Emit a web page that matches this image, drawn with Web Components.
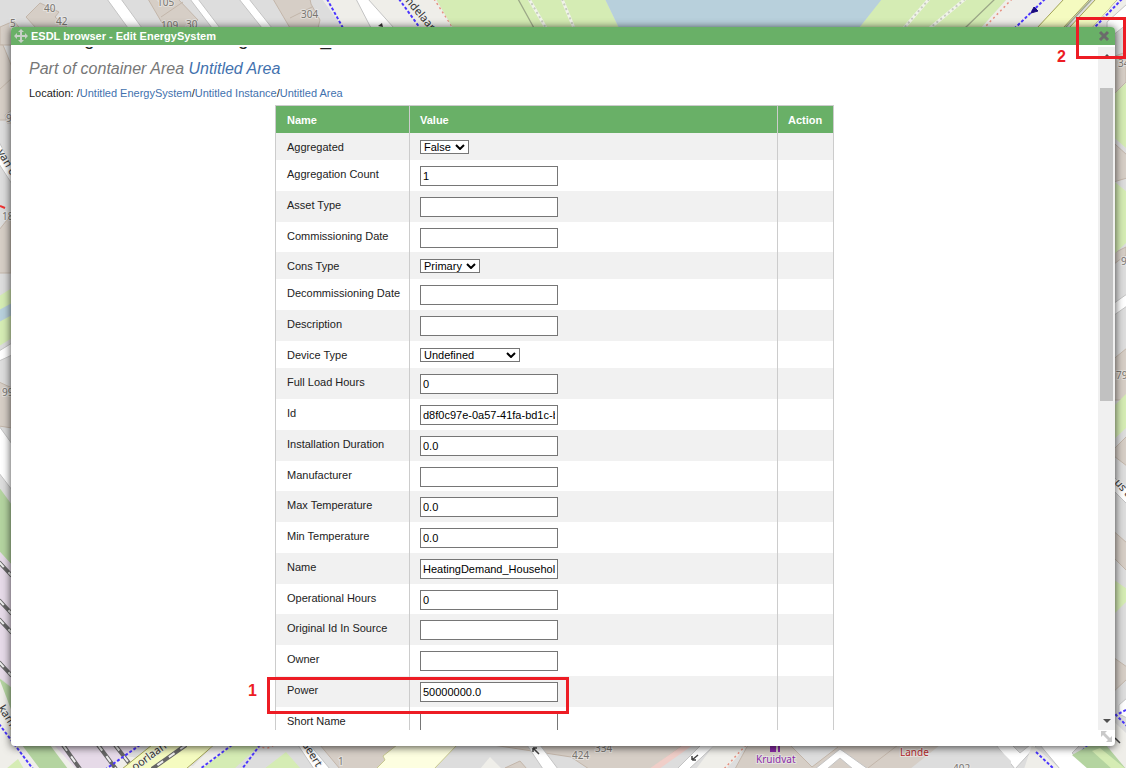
<!DOCTYPE html>
<html lang="en">
<head>
<meta charset="utf-8">
<title>ESDL browser</title>
<style>
  html, body { margin: 0; height: 100%; }
  body { font: 11px/14px "Liberation Sans", Arial, sans-serif; color: #222; overflow: hidden; }
</style>
</head>
<body>
<esdl-app></esdl-app>

<script>
const define = (name, html, setup) => {
  const template = document.createElement('template');
  template.innerHTML = html;
  customElements.define(name, class extends HTMLElement {
    connectedCallback() {
      if (this.shadowRoot) return;
      this.attachShadow({ mode: 'open' }).append(template.content.cloneNode(true));
      if (setup) setup(this, this.shadowRoot);
    }
  });
};

/* Street map behind the dialog */
define('street-map', `
<style>
  :host { display: block; position: absolute; inset: 0; }
  svg { display: block; width: 100%; height: 100%; }
  text { font: 10px "Noto Sans", sans-serif; fill: #7a7671; stroke: #eee; stroke-width: 2px; paint-order: stroke; stroke-opacity: .6; }
  .road { font-size: 11px; fill: #333; }
  .b { fill: #d6cec6; stroke: #c3b6aa; stroke-width: 1; }
  .w { fill: #fff; stroke: #c4c4c4; stroke-width: 1; }
  .g { fill: #d5ecb4; } .dg { fill: #b4d4a0; } .y { fill: #f5fbc0; stroke: #a3a356; }
  .o { fill: #efeee9; } .a { fill: #b8d0dc; } .p { fill: #e6dae8; }
  .bl { stroke: #4a35ff; stroke-width: 2; stroke-dasharray: 3 2; fill: none; }
  .rd { stroke: #e79080; stroke-width: 1.5; stroke-dasharray: 2 3; fill: none; }
  .wd { stroke: #f1f3ea; stroke-width: 3; fill: none; }
  .gd { stroke: #c6ccbe; stroke-width: 2; stroke-dasharray: 2 3; fill: none; }
  .ol { stroke: #9ca888; stroke-width: 1.3; fill: none; }
  .rail { stroke: #666; stroke-width: 4; fill: none; }
  .tie { stroke: #eee; stroke-width: 2; stroke-dasharray: 7 7; fill: none; }
</style>
<svg viewBox="0 0 1126 768" preserveAspectRatio="xMidYMid slice" aria-hidden="true">
  <rect width="1126" height="768" fill="#dddddd"/>
  <!-- top edge -->
  <path class="w" d="M107 -1h14l21 29h-14zM190 -1h8l22 29h-8zM239 -1h10l23 29h-10z"/>
  <path class="b" d="M26 17 40 3l19 9-4 5 13 11H36zM0 27l14-6 8 10v14H0zM148 -1h30l20 21-8 8h-25zM161 17l22-15M273 -1h37l1 5 9 16-2 8h-28zM290 18l22-11"/>
  <path class="o" d="M322 -1h114l17 29H343z"/>
  <path class="w" d="M356 -1h12l26 29h-23z"/>
  <path d="M378 26l4-3 1 4z" fill="#333"/>
  <path class="bl" d="M327 -1l16 29M399 -1l21 29"/>
  <path class="rd" d="M434 -1l19 29"/>
  <path class="g" d="M436 -1h169l14 29H453zM881 -1h126l-26 29H859z"/>
  <path class="a" d="M605 -1h277l-23 29H619z"/>
  <path class="ol" d="M518 -1l16 29M995 -1l-30 29"/>
  <path class="wd" d="M529 -1l17 29M562 -1l12 29M929 -1l-25 29M965 -1l-35 29"/>
  <path class="gd" d="M529 -1l17 29M562 -1l12 29M929 -1l-25 29M965 -1l-35 29"/>
  <path class="o" d="M1007 -1h57l-27 29h-56z"/>
  <path class="rd" d="M1012 -1l-28 29"/><path class="bl" d="M1045 -1l-30 29"/>
  <path d="M1031 13l3-6 4 4z" fill="#1a0a80" stroke="#1a0a80"/>
  <path class="y" d="M1064 -1h26l-27 29h-26zM1096 -1h22l-26 29h-23z"/>
  <path class="ol" d="M1092 -1l-27 29"/>
  <path class="o" d="M1118 -1h8v29h-34z"/><path class="bl" d="M1122 -1l-28 29"/>
  <path class="w" d="M1127 4v20l-20 16v-18z"/>
  <!-- right edge -->
  <path class="b" d="M1110 58l16-6v30l-16 16zM1110 140l6 5 11 10v23l-17 5zM1110 255l16-8v8l-16 12zM1110 362l17-14v52h-17zM1110 453l17-17v30zM1110 528l17 15v28l-17-17zM1110 655l17 12v12l-17 16z"/>
  <path class="g" d="M1110 98l17-16v67l-17-15zM1110 178l17 14v50l-17 16zM1110 410l17-17v34l-17 16zM1110 577l17 12v12l-17 17z"/>
  <path class="w" d="M1110 306l17-12v12l-17 12zM1110 473l17 17v14l-17-17zM1127 698l-8 7v9l8 4z"/>
  <path class="bl" d="M1126 710l-10 5 12 12"/>
  <path class="o" d="M1110 718l17 16v35h-17z"/>
  <!-- left edge -->
  <path class="b" d="M-1 45h4l9 22v53H-1zM-1 90l13-12M12 110l-7 5 2 8h5zM-1 230l12-15v58H-1zM-1 382l13 6v40l-13-2z"/>
  <path class="w" d="M-1 142l13 24v18L-1 164zM-1 351l13-8v12l-13 6zM-1 426l13 18v46l-13-17z"/>
  <path d="M0 206l5 2" stroke="#e33" stroke-width="2"/>
  <path class="g" d="M-1 296l13-8v50l-13 8z"/><path class="a" d="M-1 310l13-7v12l-13 7z"/>
  <path class="dg" d="M-1 487l13 18v60l-13-14z"/>
  <path class="p" d="M-1 551l13 14v122l-13-10z"/>
  <path class="rail" d="M-1 562l13 14M-1 600l13 14M-1 619l13 14M-1 662l13 14"/>
  <path class="tie" d="M-1 562l13 14M-1 600l13 14M-1 619l13 14M-1 662l13 14"/>
  <path class="o" d="M-1 678l13 12 40 55 160 24H-1z"/>
  <path class="dg" d="M-1 678l13 10v24z"/>
  <!-- bottom edge -->
  <path class="p" d="M54 745h90l-40 24H76z"/>
  <path class="dg" d="M22 745h28l18 24H40z"/>
  <path class="g" d="M6 769l12-10 6 10z"/>
  <path class="rail" d="M63 745l17 24M98 745l18 24M115 745l14 18"/>
  <path class="tie" d="M63 745l17 24M98 745l18 24M115 745l14 18"/>
  <path class="bl" d="M-1 724l34 45M140 745l-34 24"/>
  <path class="y" d="M152 745h62l-28 24h-64z"/>
  <path class="rail" d="M186 745l-34 24"/><path class="tie" d="M186 745l-34 24"/>
  <path class="o" d="M214 745h18l-30 24h-12z"/>
  <path class="g" d="M232 745h28l-26 24h-32zM264 769l22-17 15 17z"/>
  <path class="bl" d="M232 745l-32 24M260 745l-18 24"/>
  <path class="rd" d="M258 745q8 6 16 0"/>
  <path class="b" d="M320 745h88l-22 24h-46zM493 745h190l-32 24h-62l-18-12-13-2z"/>
  <path class="b" d="M505 768l15-7 7 8z"/>
  <path class="w" d="M298 745h12l20 24h-16zM527 745h13l18 24h-15zM701 745h14l-26 24h-12z"/>
  <path d="M397 745h60l-23 24h-58l9-9-2-4z" fill="#fdfee0" stroke="#c8c890"/>
  <path d="M683 745h10l-34 24h-10z" fill="#f0cec8"/>
  <path class="o" d="M480 769l10-12 12 12zM714 745h34l-22 24h-30z"/>
  <path class="rd" d="M746 745l-22 24"/>
  <path d="M539 754l-6-6m0 0v4m0-4h4M692 760l6-5m-6 5v-4m0 4h4M1006 751l-6-6m6 6v-5m0 5h-5M1120 743l-5-5" stroke="#444" stroke-width="1.5" fill="none"/>
  <path class="b" d="M748 745h212l16 24H735zM790 745l22 22 26-20M868 768l30-23 52 1 16 22"/>
  <path class="w" d="M815 769l25-20 28 20h-15l-13-11-13 11zM996 745h16l8 8 10-8h7l-22 24z"/>
  <path d="M940 745h55l16 16v8H910z" fill="#dddddd"/>
  <path class="o" d="M1032 745l10 8 18 16h-36z"/>
  <path class="bl" d="M1036 752l18 17M1088 745l-12 12"/>
  <path class="w" d="M1040 745h40l-8 8 20 16h-32z"/>
  <path class="dg" d="M1090 745h16l20 24h-38l-16-14z"/><path class="g" d="M1092 751l8-3 26 21h-14z"/>
  <path d="M770 746h6v6h-6zM778 746h2v6h-2z" fill="#8b2ba8"/>
  <text x="44" y="12">40</text><text x="56" y="25">42</text><text x="10" y="27">5</text>
  <text x="157" y="6">105</text><text x="161" y="29">109</text><text x="186" y="28">30</text><text x="301" y="18">304</text>
  <text class="road" transform="translate(405 1) rotate(50)">ndelaan</text>
  <text x="1118" y="67">34</text><text x="1121" y="265">95</text><text x="1116" y="379">79</text>
  <text class="road" transform="translate(1114 483) rotate(48)">us a</text>
  <text x="6" y="122">9</text><text class="road" transform="translate(-3 152) rotate(60)">van o</text>
  <text x="2" y="220">18</text><text x="2" y="396">99</text>
  <text class="road" transform="translate(-2 708) rotate(58)">kame</text>
  <text class="road" transform="translate(135 771) rotate(-36)">oorlaan</text>
  <text class="road" transform="translate(301 743) rotate(58)">Geert</text>
  <text x="338" y="765">1</text><text x="572" y="759">424</text><text x="595" y="752">334</text>
  <text x="756" y="763" style="fill:#8b2ba8">Kruidvat</text><text x="900" y="756" style="fill:#b3282d">Lande</text><text x="953" y="772">402</text>
</svg>`);

/* Window frame: title bar, scrolling body, resize grip */
define('dialog-window', `
<style>
  :host { display: flex; flex-direction: column; background: #fff; border-radius: 4px; box-shadow: 0 1px 9px rgba(0,0,0,.75); overflow: hidden; }
  header { display: flex; align-items: center; height: 18px; flex: none; padding: 0 4px 0 3px; gap: 3px; background: #69b067; color: #fff; }
  h1 { flex: 1; margin: 0; font: bold 11px/18px "Liberation Sans", Arial, sans-serif; }
  button { display: flex; border: 0; background: none; margin: 0; padding: 0; }
  svg { display: block; }
  .body { flex: 1; min-height: 0; display: flex; padding-top: 2px; }
  .view { flex: 1; min-width: 0; overflow: hidden; }
  footer { flex: none; display: flex; justify-content: flex-end; height: 16px; padding-right: 2px; }
</style>
<header>
  <svg width="14" height="14" viewBox="0 0 14 14" fill="#c6cfc6"><path d="M7 0l3 3H8v3h3V4l3 3-3 3V8H8v3h2l-3 3-3-3h2V8H3v2L0 7l3-3v2h3V3H4z"/></svg>
  <h1><slot name="title"></slot></h1>
  <button aria-label="Close"><svg width="14" height="14" viewBox="0 0 14 14"><path d="M3 3l8 8M11 3l-8 8" stroke="#6b6b6b" stroke-width="3"/></svg></button>
</header>
<div class="body"><div class="view"><slot></slot></div><scroll-rail></scroll-rail></div>
<footer><svg width="12" height="13" viewBox="0 0 12 13" fill="#c9c9c9"><path d="M0 1h6L4 3l5 5 2-2v6H5l2-2-5-5-2 2z"/></svg></footer>`);

define('scroll-rail', `
<style>
  :host { display: flex; flex-direction: column; width: 17px; flex: none; background: #f0f0f0; }
  svg { display: block; flex: none; }
  .track { flex: 1; padding: 24px 2px 0; }
  .thumb { height: 50%; background: #c1c1c1; }
</style>
<svg width="17" height="17" viewBox="0 0 17 17"><path d="M5 11l4-4 4 4z" fill="#505050"/></svg>
<div class="track"><div class="thumb"></div></div>
<svg width="17" height="17" viewBox="0 0 17 17"><path d="M5 6h8l-4 4z" fill="#505050"/></svg>`);

/* Name / value / action table built from the field list */
const fields = [
  ['Aggregated', 'False', 'narrow'], ['Aggregation Count', '1'], ['Asset Type', ''], ['Commissioning Date', ''],
  ['Cons Type', 'Primary', 'medium'], ['Decommissioning Date', ''], ['Description', ''], ['Device Type', 'Undefined', 'wide'],
  ['Full Load Hours', '0'], ['Id', 'd8f0c97e-0a57-41fa-bd1c-bb9c4f2a7d10'], ['Installation Duration', '0.0'], ['Manufacturer', ''],
  ['Max Temperature', '0.0'], ['Min Temperature', '0.0'], ['Name', 'HeatingDemand_Households'], ['Operational Hours', '0'],
  ['Original Id In Source', ''], ['Owner', ''], ['Power', '50000000.0'], ['Short Name', '']
];
define('property-table', `
<style>
  :host { display: block; }
  table { width: 559px; margin: 0 auto; table-layout: fixed; border-collapse: collapse; font-size: 11px; line-height: 14px; }
  th, td { box-sizing: border-box; border: 0 solid #ccc; border-width: 0 1px; padding: 7px 10px 0; text-align: left; vertical-align: top; white-space: nowrap; }
  th:first-child, td:first-child { padding: 7px 0 0 11px; }
  thead tr { height: 27px; }
  th { background: #69b067; color: #fff; border-top-width: 1px; }
  th:nth-child(1) { width: 134px; } th:nth-child(3) { width: 56px; }
  tbody tr { height: 31px; }
  tbody tr:nth-child(4n) { height: 30px; }
  tbody tr.choice { height: 27px; }
  tbody tr:nth-child(odd) { background: #f1f1f1; }
  td:nth-child(2) { padding-top: 6px; }
  .choice td:nth-child(2) { padding-top: 7px; }
  input, select { display: block; box-sizing: border-box; margin: 0; border: 1px solid #767676; border-radius: 0; background: #fff; color: #000; font: 11px/14px "Liberation Sans", Arial, sans-serif; }
  input { width: 138px; height: 20px; padding: 1px 2px; }
  .pick { position: relative; display: block; width: 49px; }
  .medium { width: 60px; } .wide { width: 100px; }
  select { appearance: none; width: 100%; height: 14px; line-height: 12px; padding: 0 3px; }
  .pick svg { position: absolute; right: 4px; top: 4px; }
</style>
<table>
  <thead><tr><th>Name</th><th>Value</th><th>Action</th></tr></thead>
  <tbody></tbody>
</table>`, (host, root) => {
  root.querySelector('tbody').innerHTML = fields.map(([name, value, size], i) => `
    <tr${size ? ' class="choice"' : ''}><td><label for="f${i}">${name}</label></td><td>${size
      ? `<span class="pick ${size}"><select id="f${i}"><option>${value}</option></select><svg width="10" height="6" viewBox="0 0 10 6"><path d="M1 1l4 4 4-4" fill="none" stroke="#000" stroke-width="2"/></svg></span>`
      : `<input id="f${i}" type="text" value="${value}">`}</td><td></td></tr>`).join('');
});

define('asset-editor', `
<style>
  :host { display: block; padding: 0 0 0 18px; }
  h2 { margin: -19px 0 0; font: 19px/22px "Liberation Sans", Arial, sans-serif; }
  h3 { margin: 9px 0 0; font: italic 16px/20px "Liberation Sans", Arial, sans-serif; color: #777; }
  p { margin: 7px 0 5px; line-height: 14px; }
  a { color: #4271ae; text-decoration: none; }
  property-table { margin-left: -18px; }
</style>
<h2>HeatingDemand - HeatingDemand_Households</h2>
<h3>Part of container Area <a href="#area">Untitled Area</a></h3>
<p>Location: /<a href="#system">Untitled EnergySystem</a>/<a href="#instance">Untitled Instance</a>/<a href="#area">Untitled Area</a></p>
<property-table></property-table>`);

/* Numbered red frame laid over a spot of the page */
define('call-out', `
<style>
  :host { display: block; position: absolute; box-sizing: border-box; border: 3px solid #ed1c24; pointer-events: none; }
  span { position: absolute; top: 2px; right: 100%; margin-right: 13px; color: #ed1c24; font: bold 16px/18px "Liberation Sans", Arial, sans-serif; }
  :host([low]) span { top: auto; bottom: -10px; }
</style>
<span><slot></slot></span>`);

define('esdl-app', `
<style>
  :host { display: flex; position: relative; height: 100vh; box-sizing: border-box; padding: 27px 11px 22px; overflow: hidden; }
  dialog-window { flex: 1; min-width: 0; position: relative; }
  .power { left: calc(50% - 296px); top: 677px; width: 302px; height: 37px; }
  .close { right: 0; top: 17px; width: 50px; height: 42px; }
</style>
<street-map></street-map>
<dialog-window>
  <span slot="title">ESDL browser - Edit EnergySystem</span>
  <asset-editor></asset-editor>
</dialog-window>
<call-out class="power">1</call-out>
<call-out class="close" low>2</call-out>`);
</script>
</body>
</html>
